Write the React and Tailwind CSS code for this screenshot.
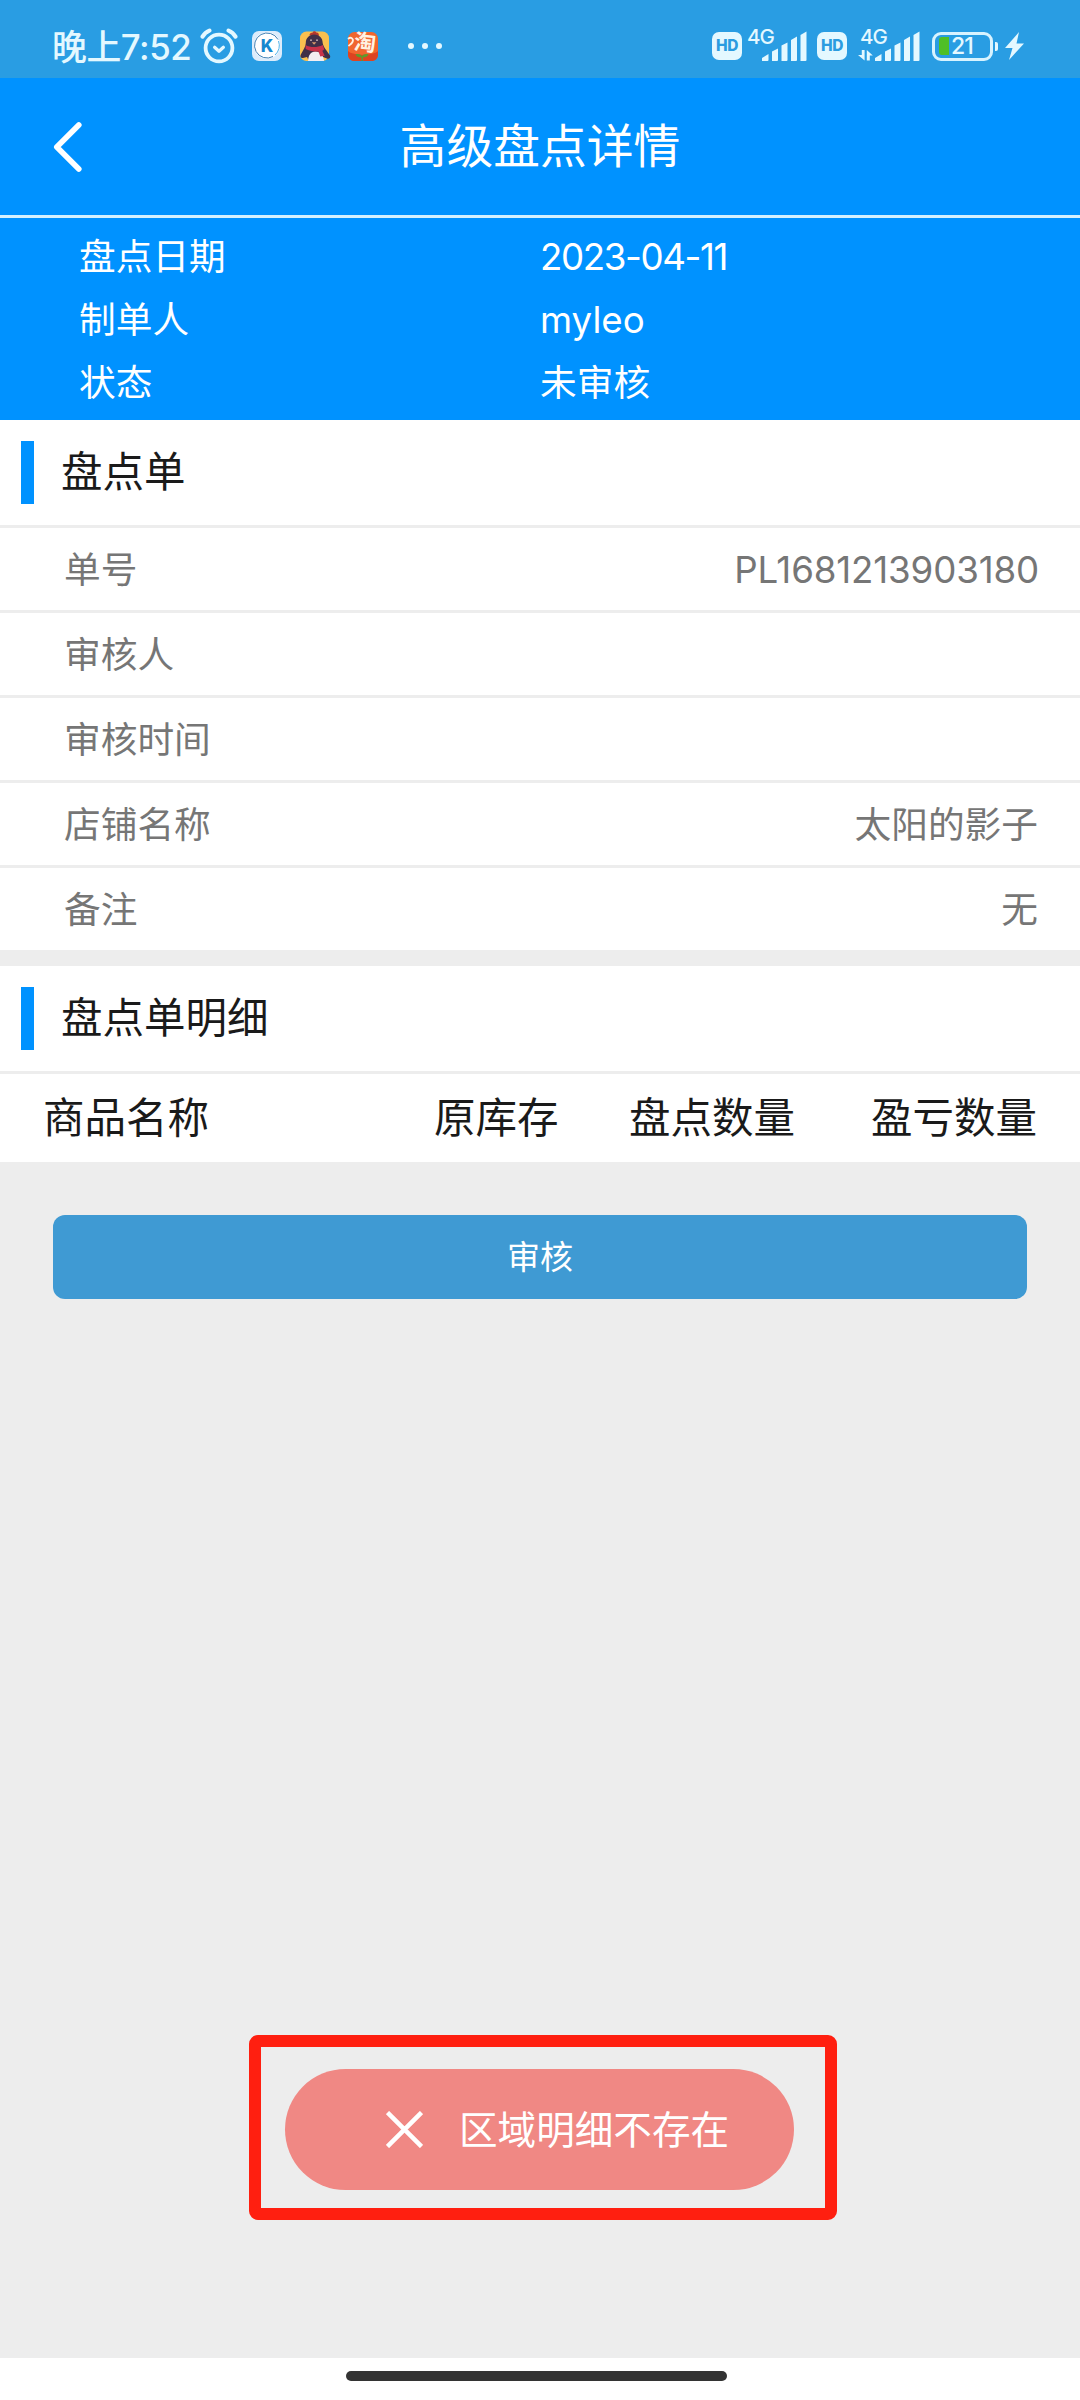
import clsx from "clsx";

const summary = [
  { label: "盘点日期", value: "2023-04-11" },
  { label: "制单人", value: "myleo" },
  { label: "状态", value: "未审核" },
];

const orderRows = [
  { label: "单号", value: "PL1681213903180" },
  { label: "审核人", value: "" },
  { label: "审核时间", value: "" },
  { label: "店铺名称", value: "太阳的影子" },
  { label: "备注", value: "无" },
];

const AlarmIcon = () => (
  <svg width="38" height="36" viewBox="0 0 38 36" fill="none" stroke="#e4f8ff" strokeLinecap="round">
    <circle cx="19" cy="20" r="13.4" strokeWidth="3.8" />
    <path d="M2.6 8.6C4 6 6.2 3.800 9.400 2.600M35.400 8.600C34 6 31.800 3.800 28.600 2.600" strokeWidth="4.2" />
    <path d="M14.600 19.300l4.400 4 4.400-4" strokeWidth="3.2" strokeLinejoin="round" />
  </svg>
);

const KIcon = () => (
  <svg width="30" height="30" viewBox="0 0 30 30">
    <rect width="30" height="30" rx="7" fill="#dcecfb" />
    <circle cx="15" cy="14.500" r="13.200" fill="#fff" />
    <path d="M26 8.500A12.500 12.500 0 1 0 21 25.500" fill="none" stroke="#3f7fb4" strokeWidth="1" />
    <path d="M23 24A12.500 12.500 0 0 0 26.500 10" fill="none" stroke="#4fb3ea" strokeWidth="1" />
    <text x="15" y="20.500" textAnchor="middle" fontSize="17" fontWeight="800" fontFamily="Inter, sans-serif" fill="#1587cf">
      K
    </text>
  </svg>
);

const PenguinIcon = () => (
  <svg width="32" height="32" viewBox="0 0 32 32">
    <rect x="1" y="1.500" width="29" height="29.500" rx="6.500" fill="#f9c04f" />
    <path d="M10.500 5.500c0-2 1.500-3 2.800-2.600C14 .800 16.500.600 17.200 2.600c1.800-.3 3 1 2.600 3.400z" fill="#b5382c" />
    <path d="M15.200 4.500c-5.200 0-8.400 3.600-8.400 8.500 0 3.500-2.800 7.500-5 11.500-.9 2.200.2 4 2.200 3.500L8 27l2 4h12l2-4 4.500 1.700c2.200.3 3.300-1.500 2.500-3.300C28.500 21.500 24.200 17 23.700 13c0-4.900-3.300-8.500-8.500-8.500z" fill="#403048" />
    <path d="M9 31c.3-5.500 2.500-9.500 7.500-9.500S24.500 25.500 25 31z" fill="#f3eef2" />
    <path d="M12.800 12.200h4.600l-2.300 2.600z" fill="#d99a6c" />
    <circle cx="12" cy="10.200" r=".9" fill="#c9b4b4" />
    <circle cx="18" cy="10.200" r=".9" fill="#c9b4b4" />
    <path d="M6.500 15c5 2.800 11.500 2.800 17.300 0l1.400 4.200c-.6.800-1.200 1.200-1.900 1.500l2.400 5-4.400.7-1.800-5c-5 .6-9-.4-12.800-2.300z" fill="#c9324a" />
  </svg>
);

const TaoIcon = () => (
  <svg className="overflow-visible" width="32" height="32" viewBox="0 0 32 32">
    <rect x="1" y="2" width="30" height="29" rx="6.500" fill="#f0662e" />
    <path d="M1 21c5 5 25 5 30 0v3.500c0 4-2.500 6.500-6.500 6.500h-17C3.500 31 1 28.500 1 24.500z" fill="#dd4321" />
    <text
      x="18"
      y="20.500"
      textAnchor="middle"
      fontSize="22"
      fontWeight="700"
      fontFamily="'Noto Sans CJK SC', sans-serif"
      fill="#fff2e2"
      transform="rotate(6 18 14)"
    >
      淘
    </text>
    <path d="M1.500 8.500c2.500-2 5.500.500 4 3.500-.8 1.700-2.300 2.600-3.500 3.500" fill="none" stroke="#fff2e2" strokeWidth="1.800" strokeLinecap="round" />
    <path d="M14.500 31v-3.500c-3.200 0-5.200-1-6-3.200 3-.9 5.300 0 6.500 2 1.200-2 3.500-2.900 6.500-2-.8 2.200-2.800 3.200-5.500 3.200V31z" fill="#5f9a2c" />
  </svg>
);

const Signal = ({ data }) => (
  <div className={clsx("relative h-[34px]", data ? "w-[62px]" : "w-[60px]")}>
    <svg className="absolute inset-0" width="62" height="34" viewBox="0 0 62 34" fill="#e4f8ff">
      {data && <path d="M3.800 23h2.800v10.500L0 28h3.800zM8.800 33.500V23l6 5.500h-3v5z" />}
      <g transform={data ? "translate(17 0)" : "translate(15 0)"}>
        <path d="M0 34v-3l6.500-4V33a1 1 0 0 1-1 1z" />
        <path d="M10 34V24.500l6-3V33a1 1 0 0 1-1 1z" />
        <path d="M19.500 34V18.500l6-3V33a1 1 0 0 1-1 1z" />
        <path d="M29 34V13l6-3.500V33a1 1 0 0 1-1 1z" />
        <path d="M38.500 34V8l6-3.500V33a1 1 0 0 1-1 1z" />
      </g>
    </svg>
    <span
      className={clsx(
        "absolute top-0 text-[20.5px] leading-none font-medium tracking-[-1px]",
        data ? "left-[2px]" : "left-0"
      )}
    >
      4G
    </span>
  </div>
);

const HdBadge = () => (
  <div className="flex h-[28px] w-[30px] items-center justify-center rounded-[7px] bg-[#e4f8ff] text-[15.5px] leading-none font-extrabold tracking-[-0.3px] text-[#2b9ce0]">
    HD
  </div>
);

const StatusBar = () => (
  <div className="flex h-[78px] items-center bg-[#299de3] pt-[14px] pl-[52px] text-[#e4f8ff]">
    <span className="w-[140px] pt-[2px] text-[34.8px] leading-none font-medium tracking-[-0.4px] whitespace-nowrap">
      晚上7:52
    </span>
    <div className="ml-[8px] flex items-center">
      <AlarmIcon />
      <div className="ml-[14px]"><KIcon /></div>
      <div className="ml-[17px]"><PenguinIcon /></div>
      <div className="ml-[16px]"><TaoIcon /></div>
    </div>
    <div className="ml-[29px] flex gap-[8px]">
      <span className="size-[6px] rounded-full bg-[#e4f8ff]" />
      <span className="size-[6px] rounded-full bg-[#e4f8ff]" />
      <span className="size-[6px] rounded-full bg-[#e4f8ff]" />
    </div>

    <div className="ml-[270px] flex items-center">
      <HdBadge />
      <div className="ml-[5px] pb-[4px]"><Signal /></div>
      <div className="ml-[10px]"><HdBadge /></div>
      <div className="ml-[11px] pb-[4px]"><Signal data /></div>
      <div className="ml-[12px] flex h-[29px] w-[61px] items-center rounded-[9px] border-[3px] border-[#d8f3ff] pl-[4px]">
        <span className="h-[18px] w-[10px] rounded-l-[3px] bg-[#4fbf26]" />
        <span className="ml-[2px] text-[23px] leading-none font-medium tracking-[-1px]">21</span>
      </div>
      <span className="ml-[2px] h-[9px] w-[3px] rounded-r-[2px] bg-[#e4f8ff]" />
      <svg className="ml-[7px]" width="19" height="28" viewBox="0 0 19 28" fill="#e4f8ff">
        <path d="M14 0L0 16h7.500L4 28l15-16.500h-7.500z" />
      </svg>
    </div>
  </div>
);

const SectionTitle = ({ children }) => (
  <div className="flex h-[108px] items-center border-b-[3px] border-[#ededed] bg-white pl-[21px]">
    <span className="h-[63px] w-[13px] bg-[#0092ff]" />
    <h2 className="ml-[27px] pt-[1px] text-[41.5px] leading-none text-[#1a1a1a]">{children}</h2>
  </div>
);

const Toast = ({ message }) => (
  <div className="absolute top-[2035px] left-[249px] flex h-[185px] w-[588px] rounded-[9px] border-[12px] border-[#ff1f10] pt-[22px] pl-[24px]">
    <div className="flex h-[121px] w-[509px] items-center rounded-full bg-[#f08884] pl-[101px] text-white">
      <svg width="37" height="37" viewBox="0 0 37 37" fill="none" stroke="currentColor" strokeWidth="4.500">
        <path d="M1.500 1.500l34 34M35.500 1.500l-34 34" />
      </svg>
      <span className="ml-[36px] pt-[2px] text-[38.600px] leading-none whitespace-nowrap">{message}</span>
    </div>
  </div>
);

const App = () => {
  return (
    <div className="relative flex h-[2400px] w-[1080px] flex-col overflow-hidden bg-[#ededed] font-['Inter','Noto_Sans_CJK_SC',sans-serif]">
      <StatusBar />

      <header className="flex h-[140px] items-center border-b-[3px] border-[#d5f1ff] bg-[#0092ff] text-white">
        <div className="flex w-[200px] pl-[52px]">
          <svg width="32" height="52" viewBox="0 0 32 52" fill="none" stroke="currentColor" strokeWidth="5.600" strokeLinecap="round" strokeLinejoin="round">
            <path d="M26.800 4L4.800 26l22 22" />
          </svg>
        </div>
        <h1 className="flex-1 text-center text-[46.800px] leading-none">高级盘点详情</h1>
        <div className="w-[200px]" />
      </header>

      <section className="flex h-[202px] flex-col bg-[#0092ff] pt-[8px] text-[36.700px] leading-none text-white">
        {summary.map((item) => (
          <div key={item.label} className="flex h-[63px] items-center pl-[79px]">
            <span className="w-[461px]">{item.label}</span>
            {/* dates are set a little tighter */}
            <span className={clsx(/^\d/.test(item.value) && "tracking-[-1.4px]")}>{item.value}</span>
          </div>
        ))}
      </section>

      <SectionTitle>盘点单</SectionTitle>
      <section className="flex flex-col gap-[3px]">
        {orderRows.map((row) => (
          <div
            key={row.label}
            className="flex h-[82px] items-center justify-between bg-white pt-[2px] pr-[42px] pl-[64px] text-[36.700px] leading-none text-[#767676]"
          >
            <span>{row.label}</span>
            <span className={clsx(/^PL/.test(row.value) && "-mr-[1px] tracking-[-0.15px]")}>{row.value}</span>
          </div>
        ))}
      </section>

      <div className="mt-[16px]">
        <SectionTitle>盘点单明细</SectionTitle>
        <div className="flex h-[88px] items-center bg-white pt-[2px] pl-[43px] text-[41.500px] leading-none whitespace-nowrap text-[#1a1a1a]">
          <span className="w-[391px]">商品名称</span>
          <span className="w-[195px]">原库存</span>
          <span className="w-[242px]">盘点数量</span>
          <span>盈亏数量</span>
        </div>
      </div>

      <button className="mx-[53px] mt-[53px] h-[84px] rounded-[12px] bg-[#3f9ad3] text-[33px] leading-none text-white">
        审核
      </button>

      <Toast message="区域明细不存在" />

      <div className="mt-auto flex h-[42px] justify-center bg-white pt-[13px] pr-[7px]">
        <span className="h-[10px] w-[381px] rounded-full bg-[#333]" />
      </div>
    </div>
  );
};

export default App;
